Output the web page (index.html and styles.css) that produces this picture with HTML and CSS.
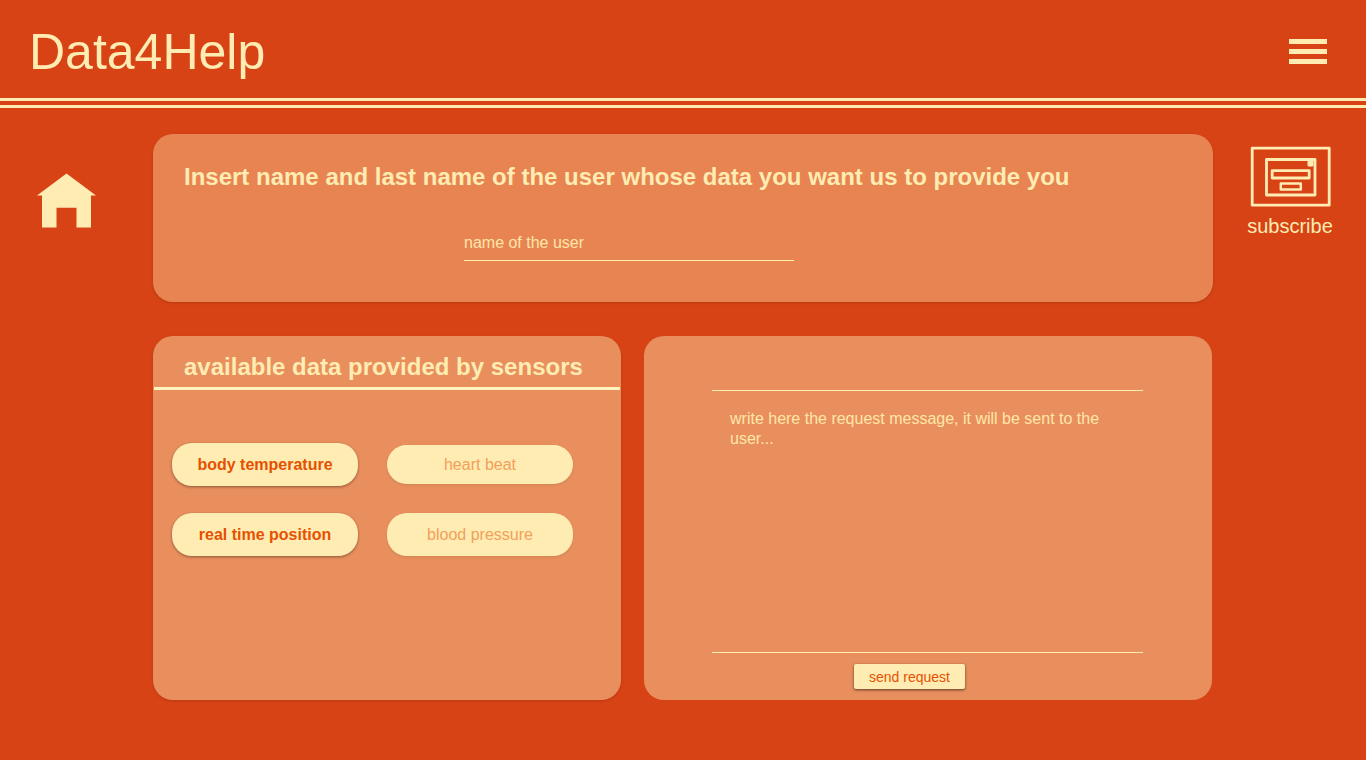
FILE: index.html
```
<!DOCTYPE html>
<html lang="en">
<head>
<meta charset="utf-8">
<title>Data4Help</title>
<link rel="stylesheet" href="styles.css">
</head>
<body>
<header class="topbar">
  <h1 class="brand">Data4Help</h1>
  <button class="menu" type="button" aria-label="Menu">
    <span class="menu-bar"></span>
    <span class="menu-bar"></span>
    <span class="menu-bar"></span>
  </button>
</header>
<div class="stripes"></div>
<div class="page">
  <nav class="side side-left">
    <a class="home" href="#" aria-label="Home">
      <svg class="home-icon" width="60" height="56" viewBox="0 0 60 56" aria-hidden="true">
        <path fill="currentColor" d="M29.5.5 59 22.5H54V54.5H39.5V34.7H19.5V54.5H5V22.5H0Z"/>
      </svg>
    </a>
  </nav>
  <main class="content">
    <section class="card search">
      <h2 class="title"><label for="user">Insert name and last name of the user whose data you want us to provide you</label></h2>
      <input class="user-input" id="user" type="text" placeholder="name of the user">
    </section>
    <div class="panels">
      <section class="card panel">
        <h2 class="title panel-title">available data provided by sensors</h2>
        <div class="sensors">
          <button class="sensor sensor-on" type="button">body temperature</button>
          <button class="sensor sensor-short" type="button">heart beat</button>
          <button class="sensor sensor-on" type="button">real time position</button>
          <button class="sensor" type="button">blood pressure</button>
        </div>
      </section>
      <form class="card panel request">
        <textarea class="message" aria-label="Request message" placeholder="write here the request message, it will be sent to the user..."></textarea>
        <button class="send" type="button">send request</button>
      </form>
    </div>
  </main>
  <aside class="side side-right">
    <a class="subscribe" href="#">
      <svg width="82" height="62" viewBox="-1 0 82 62" fill="none" stroke="currentColor" stroke-width="2.8" stroke-linejoin="round" aria-hidden="true">
        <rect x="2.2" y="2.2" width="77" height="57"/>
        <rect x="16.5" y="13.5" width="48.5" height="35.5"/>
        <rect x="22.2" y="24.7" width="37" height="7.3"/>
        <rect x="30.8" y="37.5" width="20" height="6" stroke-width="2.5"/>
        <rect x="57.5" y="14.5" width="6" height="6" rx="1.5" fill="currentColor" stroke="none"/>
      </svg>
      <span>subscribe</span>
    </a>
  </aside>
</div>
</body>
</html>
```

FILE: styles.css
```
* {
  box-sizing: border-box;
}

body {
  margin: 0;
  min-height: 100vh;
  background: #d84315;
  color: #ffecb3;
  font-family: "Liberation Sans", Arial, sans-serif;
  font-size: 16px;
  line-height: 20px;
}

button,
input,
textarea {
  font: inherit;
}

.topbar {
  display: flex;
  justify-content: space-between;
  align-items: flex-start;
  height: 98px;
  padding: 24px 39px 0 29px;
}

.brand {
  margin: 0;
  font-size: 50px;
  font-weight: 400;
  line-height: 56px;
}

.menu {
  display: flex;
  flex-direction: column;
  gap: 5px;
  width: 38px;
  margin-top: 15px;
  padding: 0;
  border: 0;
  background: none;
}

.menu-bar {
  height: 5px;
  background: #ffecb3;
}

.stripes {
  height: 10px;
  border-top: 3px solid #ffecb3;
  border-bottom: 3px solid #ffecb3;
}

.page {
  display: grid;
  grid-template-columns: 153px 1fr 153px;
  padding: 26px 0 60px;
}

.side {
  display: flex;
  justify-content: center;
  align-items: flex-start;
}

.side-left {
  padding: 39px 19px 0 0;
}

.side-right {
  padding: 12px 0 0 1px;
}

.home,
.subscribe {
  color: #ffecb3;
  text-decoration: none;
}

.home-icon {
  display: block;
}

.subscribe {
  display: flex;
  flex-direction: column;
  align-items: center;
  gap: 6px;
  font-size: 20px;
  line-height: 24px;
}

.content {
  display: flex;
  flex-direction: column;
  gap: 34px;
}

.card {
  border-radius: 20px;
}

.title {
  margin: 0;
  font-size: 24px;
  font-weight: 700;
  line-height: 28px;
}

.search {
  padding: 29px 31px 41px;
  background: #e78451;
  box-shadow: 0 1px 3px rgba(0, 0, 0, 0.16);
}

.user-input {
  display: block;
  width: 330px;
  margin: 42px 0 0 280px;
  padding: 0 0 7px;
  border: 0;
  border-bottom: 1px solid #fff0b0;
  border-radius: 0;
  background: transparent;
  color: #ffecb3;
  line-height: 20px;
}

.user-input::placeholder,
.message::placeholder {
  color: #ffe6a9;
  opacity: 1;
}

.panels {
  display: grid;
  grid-template-columns: 468fr 568fr;
  gap: 23px;
  padding-right: 1px;
}

.panel {
  min-height: 364px;
  background: #e98f5d;
}

.panel:first-child {
  padding: 0 1px;
  box-shadow: 0 1px 3px rgba(0, 0, 0, 0.16);
}

.panel-title {
  padding: 17px 30px 6px;
  border-bottom: 3px solid #fff3c0;
}

.sensors {
  display: grid;
  grid-template-columns: 186px 186px;
  grid-auto-rows: 43px;
  gap: 27px 29px;
  align-items: center;
  padding: 53px 18px 0;
}

.sensor {
  height: 43px;
  padding: 0;
  border: 0;
  border-radius: 20px;
  background: #ffecb3;
  color: #f2a05a;
  box-shadow: 0 1px 3px rgba(0, 0, 0, 0.1);
}

.sensor-short {
  height: 39px;
}

.sensor-on {
  color: #e65100;
  font-weight: 700;
  box-shadow: 0 1px 3px rgba(0, 0, 0, 0.4);
}

.request {
  padding: 54px 69px 11px 68px;
}

.message {
  display: block;
  width: 100%;
  height: 263px;
  padding: 18px;
  border: 0;
  border-top: 1px solid #fff0b0;
  border-bottom: 1px solid #fff0b0;
  background: transparent;
  color: #ffecb3;
  line-height: 20px;
  resize: none;
}

.send {
  display: block;
  width: 111px;
  height: 25px;
  margin: 11px 0 0 142px;
  padding: 0;
  border: 0;
  border-radius: 2px;
  background: #ffecb3;
  color: #e65100;
  font-size: 14px;
  box-shadow: 0 1px 3px rgba(0, 0, 0, 0.6);
}
```
